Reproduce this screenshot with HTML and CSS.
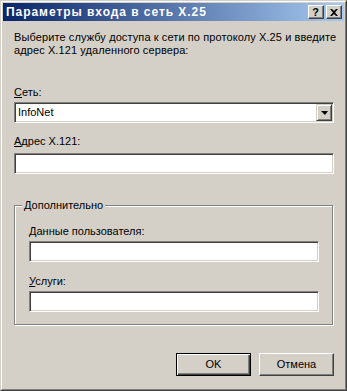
FILE: index.html
```html
<!DOCTYPE html>
<html>
<head>
<meta charset="utf-8">
<title>Параметры входа в сеть X.25</title>
<link rel="stylesheet" href="styles.css">
</head>
<body>
<div class="window">
  <div class="frame">
    <div class="titlebar">
      <span class="title">Параметры входа в сеть X.25</span>
      <div class="caption-btns">
        <span class="cbtn help">?</span>
        <span class="cbtn close">
          <svg width="8" height="7" viewBox="0 0 8 7"><path d="M0 0h2l2 2 2-2h2L5 3.5 8 7H6L4 5 2 7H0l3-3.5z" fill="#000"/></svg>
        </span>
      </div>
    </div>

    <div class="content">
      <p class="intro">Выберите службу доступа к сети по протоколу X.25 и введите<br>адрес X.121 удаленного сервера:</p>

      <div class="label lbl-net"><u>С</u>еть:</div>
      <div class="combo">
        <span class="combo-text">InfoNet</span>
        <span class="combo-btn"><span class="arrow"></span></span>
      </div>

      <div class="label lbl-addr"><u>А</u>дрес X.121:</div>
      <div class="edit"></div>

      <div class="group">
        <span class="legend">Дополнительно</span>
        <div class="label"><u>Д</u>анные пользователя:</div>
        <div class="edit edit-small"></div>
        <div class="label lbl-svc"><u>У</u>слуги:</div>
        <div class="edit edit-small"></div>
      </div>

      <div class="buttons">
        <span class="btn default">OK</span>
        <span class="btn">Отмена</span>
      </div>
    </div>
  </div>
</div>
</body>
</html>
```

FILE: styles.css
```css
body {
  margin: 0;
  background: #d4d0c8;
  font-family: "Liberation Sans", Arial, sans-serif;
  font-size: 11px;
  line-height: 13px;
  color: #000;
}

.window {
  width: 347px;
  height: 391px;
  box-sizing: border-box;
  border: 1px solid;
  border-color: #d4d0c8 #404040 #404040 #d4d0c8;
  background: #d4d0c8;
}

.frame {
  height: 100%;
  box-sizing: border-box;
  border: 1px solid;
  border-color: #fff #808080 #808080 #fff;
  padding: 1px;
}

/* title bar */
.titlebar {
  height: 18px;
  display: flex;
  align-items: center;
  justify-content: space-between;
  padding: 0 2px 0 3px;
  background: linear-gradient(to right, #0a246a, #a6caf0);
}

.title {
  color: #fff;
  font-weight: bold;
  font-size: 12px;
  letter-spacing: 0.95px;
  white-space: nowrap;
}

.caption-btns {
  display: flex;
  gap: 2px;
}

.cbtn {
  width: 16px;
  height: 14px;
  box-sizing: border-box;
  display: flex;
  align-items: center;
  justify-content: center;
  background: #d4d0c8;
  border: 1px solid;
  border-color: #fff #404040 #404040 #fff;
  box-shadow: inset -1px -1px #808080;
}

.help {
  font-weight: bold;
  font-size: 11px;
  line-height: 11px;
  padding-right: 1px;
}

.close svg {
  display: block;
  margin-right: 1px;
}

/* dialog body */
.content {
  padding: 10px 10px 0 11px;
}

.intro {
  margin: 0;
  letter-spacing: 0.1px;
  white-space: nowrap;
}

.label {
  margin-top: 12px;
}

.lbl-net {
  margin-top: 29px;
}

.label u {
  text-decoration-thickness: 1px;
  text-underline-offset: 1px;
}

.combo {
  margin-top: 3px;
  width: 320px;
  height: 21px;
  box-sizing: border-box;
  display: flex;
  align-items: center;
  justify-content: space-between;
  background: #fff;
  border: 1px solid;
  border-color: #808080 #fff #fff #808080;
  box-shadow: inset 1px 1px #404040, inset -1px -1px #d4d0c8;
  padding: 1px;
}

.combo-text {
  padding-left: 2px;
}

.combo-btn {
  width: 16px;
  height: 17px;
  box-sizing: border-box;
  display: flex;
  align-items: center;
  justify-content: center;
  background: #d4d0c8;
  border: 1px solid;
  border-color: #d4d0c8 #404040 #404040 #d4d0c8;
  box-shadow: inset 1px 1px #fff, inset -1px -1px #808080;
}

.arrow {
  width: 0;
  height: 0;
  border-left: 4px solid transparent;
  border-right: 3px solid transparent;
  border-top: 4px solid #000;
  margin-top: 1px;
}

.edit {
  margin-top: 5px;
  width: 320px;
  height: 21px;
  box-sizing: border-box;
  background: #fff;
  border: 1px solid;
  border-color: #808080 #fff #fff #808080;
  box-shadow: inset 1px 1px #404040, inset -1px -1px #d4d0c8;
}

.edit-small {
  width: 290px;
  margin-top: 3px;
}

/* group box */
.group {
  position: relative;
  margin-top: 31px;
  width: 319px;
  height: 120px;
  box-sizing: border-box;
  border: 1px solid #808080;
  box-shadow: 1px 1px 0 #fff, inset 1px 1px 0 #fff;
  padding: 19px 14px 0 14px;
}

.group .label {
  margin-top: 0;
}

.group .lbl-svc {
  margin-top: 13px;
}

.legend {
  position: absolute;
  top: -7px;
  left: 7px;
  padding: 0 2px;
  background: #d4d0c8;
}

/* buttons */
.buttons {
  display: flex;
  justify-content: flex-end;
  gap: 8px;
  width: 320px;
  margin-top: 28px;
}

.btn {
  width: 75px;
  height: 23px;
  box-sizing: border-box;
  display: flex;
  align-items: center;
  justify-content: center;
  background: #d4d0c8;
  border: 1px solid;
  border-color: #fff #404040 #404040 #fff;
  box-shadow: inset -1px -1px #808080;
}

.btn.default {
  border-color: #000;
  box-shadow: inset 1px 1px #fff, inset -1px -1px #404040, inset -2px -2px #808080;
}
```
